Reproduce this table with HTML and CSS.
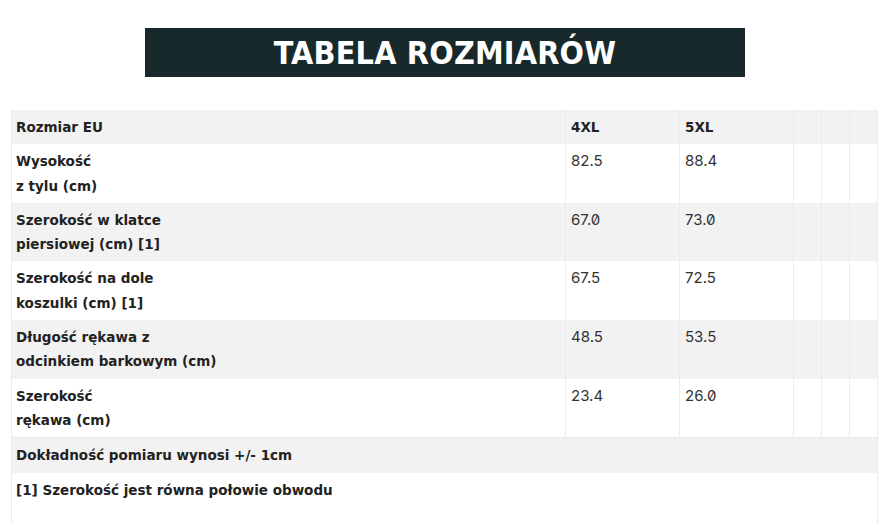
FILE: index.html
```html
<!DOCTYPE html>
<html lang="pl">
<head>
<meta charset="utf-8">
<title>Tabela rozmiarów</title>
<link rel="stylesheet" href="styles.css">
</head>
<body>
<div class="page">
  <div class="banner"><h1 class="banner-title">TABELA ROZMIARÓW</h1></div>
  <table class="sizes">
    <colgroup>
      <col class="c-label"><col class="c-size"><col class="c-size"><col class="c-x"><col class="c-x"><col class="c-x">
    </colgroup>
    <tr class="gray head">
      <td class="label">Rozmiar EU</td><td class="label sz">4XL</td><td class="label sz">5XL</td><td></td><td></td><td></td>
    </tr>
    <tr>
      <td class="label">Wysokość<br>z tylu (cm)</td><td class="num">82.5</td><td class="num">88.4</td><td></td><td></td><td></td>
    </tr>
    <tr class="gray">
      <td class="label">Szerokość w klatce<br>piersiowej (cm) [1]</td><td class="num">67.0</td><td class="num">73.0</td><td></td><td></td><td></td>
    </tr>
    <tr>
      <td class="label">Szerokość na dole<br>koszulki (cm) [1]</td><td class="num">67.5</td><td class="num">72.5</td><td></td><td></td><td></td>
    </tr>
    <tr class="gray">
      <td class="label">Długość rękawa z<br>odcinkiem barkowym (cm)</td><td class="num">48.5</td><td class="num">53.5</td><td></td><td></td><td></td>
    </tr>
    <tr class="last">
      <td class="label">Szerokość<br>rękawa (cm)</td><td class="num">23.4</td><td class="num">26.0</td><td></td><td></td><td></td>
    </tr>
    <tr class="gray note">
      <td class="label" colspan="6">Dokładność pomiaru wynosi +/- 1cm</td>
    </tr>
    <tr class="note tall">
      <td class="label" colspan="6">[1] Szerokość jest równa połowie obwodu</td>
    </tr>
  </table>
</div>
</body>
</html>
```
FILE: styles.css
```css
html, body { margin: 0; padding: 0; background: #fff; }
.page { padding: 28px 11px 0 11px; }
.banner {
  width: 600px;
  height: 49px;
  margin: 0 0 33px 134px;
  background: #18292b;
  display: flex;
  align-items: center;
  justify-content: center;
}
.banner-title {
  margin: 0;
  font-family: "DejaVu Sans Condensed", "DejaVu Sans", sans-serif;
  font-weight: bold;
  font-size: 32px;
  color: #fff;
  letter-spacing: 0.2px;
}
.sizes {
  width: 867px;
  border-collapse: collapse;
  table-layout: fixed;
}
.c-label { width: 554px; }
.c-size { width: 114px; }
.c-x { width: 28px; }
.sizes td {
  padding: 5px 4px;
  line-height: 24.3px;
  vertical-align: top;
  border-left: 1px solid #ebebeb;
  border-right: 1px solid #ebebeb;
}
.sizes tr.last td { border-bottom: 1px solid #ebebeb; }
.gray td { background: #f2f2f2; }
.label {
  font-family: "DejaVu Sans", sans-serif;
  font-weight: bold;
  font-size: 13.5px;
  color: #222;
}
.sizes td.sz { padding-left: 5px; }
.sizes td.num {
  padding-left: 5px;
  font-family: Inter, "Liberation Sans", sans-serif;
  font-feature-settings: "zero" 1;
  font-size: 15px;
  color: #333;
}
.sizes tr.tall td { height: 42px; }
```
